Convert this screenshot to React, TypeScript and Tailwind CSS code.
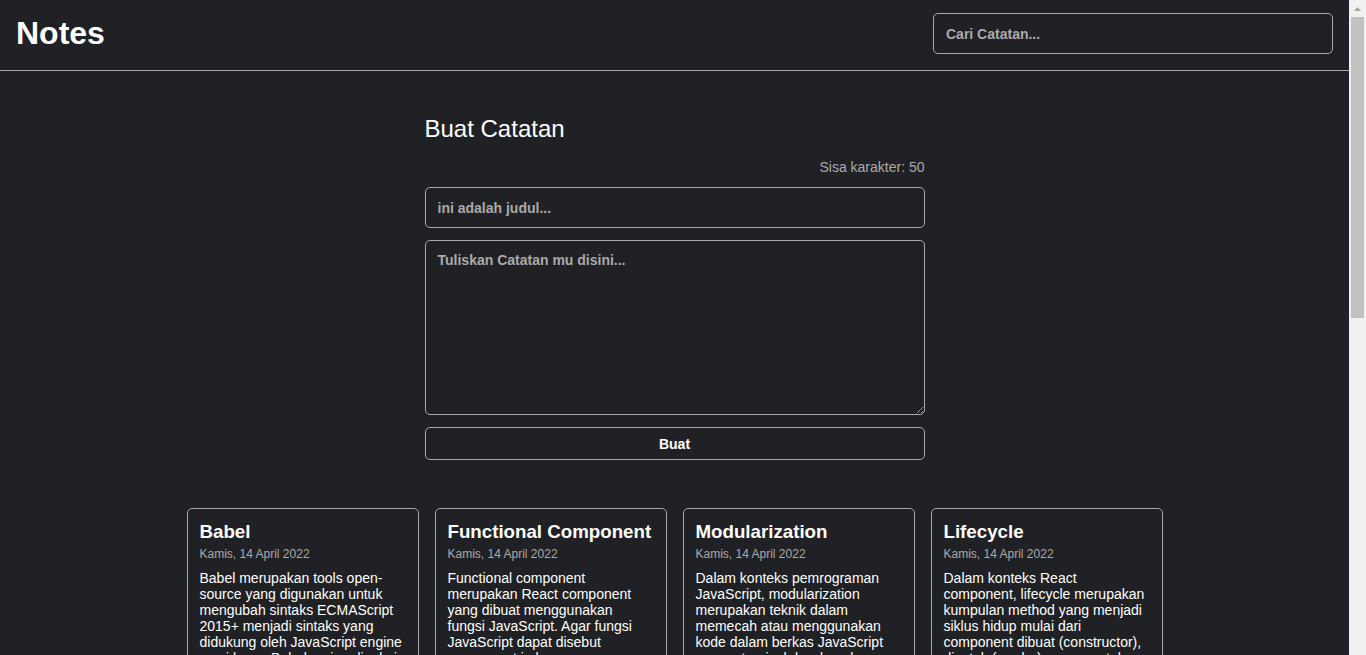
const notes = [
  {
    id: 1,
    title: "Babel",
    createdAt: "Kamis, 14 April 2022",
    body: "Babel merupakan tools open-source yang digunakan untuk mengubah sintaks ECMAScript 2015+ menjadi sintaks yang didukung oleh JavaScript engine versi lama. Babel sering dipakai ketika kita menggunakan sintaks terbaru termasuk sintaks JSX.",
  },
  {
    id: 2,
    title: "Functional Component",
    createdAt: "Kamis, 14 April 2022",
    body: "Functional component merupakan React component yang dibuat menggunakan fungsi JavaScript. Agar fungsi JavaScript dapat disebut component ia harus mengembalikan React element dan dipanggil layaknya React component.",
  },
  {
    id: 3,
    title: "Modularization",
    createdAt: "Kamis, 14 April 2022",
    body: "Dalam konteks pemrograman JavaScript, modularization merupakan teknik dalam memecah atau menggunakan kode dalam berkas JavaScript secara terpisah berdasarkan tanggung jawabnya masing-masing.",
  },
  {
    id: 4,
    title: "Lifecycle",
    createdAt: "Kamis, 14 April 2022",
    body: "Dalam konteks React component, lifecycle merupakan kumpulan method yang menjadi siklus hidup mulai dari component dibuat (constructor), dicetak (render), pasca-cetak (componentDidMount), dan sebagainya.",
  },
  {
    id: 5,
    title: "ESM",
    createdAt: "Kamis, 14 April 2022",
    body: "ESM (ECMAScript Module) merupakan format modularisasi standar JavaScript.",
  },
  {
    id: 6,
    title: "Module Bundler",
    createdAt: "Kamis, 14 April 2022",
    body: "Dalam konteks pemrograman JavaScript, module bundler merupakan tools yang digunakan untuk menggabungkan seluruh modul JavaScript yang digunakan oleh aplikasi menjadi satu berkas.",
  },
];

const NoteItem = ({ title, createdAt, body }: { title: string; createdAt: string; body: string }) => (
  <div className="border border-[#aaa] rounded-[5px] p-3">
    <h3 className="text-[18.72px] font-bold leading-[normal] text-white">{title}</h3>
    <p className="mt-1 text-[12px] leading-[normal] text-[#aaa]">{createdAt}</p>
    <p className="mt-[9px] text-[14px] leading-4 text-white">{body}</p>
  </div>
);

// browser scrollbar as it appears in the screenshot
const Scrollbar = () => (
  <div className="sticky top-0 w-[17px] h-screen shrink-0 bg-[#f1f1f1] flex flex-col items-center">
    <div className="h-[17px] w-full flex items-center justify-center">
      <svg width="7" height="4" viewBox="0 0 7 4">
        <path d="M0 4 L3.5 0 L7 4 Z" fill="#a3a3a3" />
      </svg>
    </div>
    <div className="w-[13px] h-[301px] bg-[#c1c1c1]" />
  </div>
);

export default function App() {
  return (
    <div className="flex bg-[#202124] leading-[normal] font-['Liberation_Sans',Arial,sans-serif]">
      <div className="flex-1 min-w-0 min-h-screen text-white">
        <header className="flex items-center justify-between px-4 pt-[13px] pb-[16px] border-b border-[#aaa]">
          <h1 className="text-[32px] font-bold leading-[normal]">Notes</h1>
          <input
            type="text"
            placeholder="Cari Catatan..."
            className="w-[400px] h-[41px] px-3 bg-transparent border border-[#aaa] rounded-[5px] text-[14px] font-bold text-white placeholder:text-[#aaa] outline-none"
          />
        </header>

        <main className="pb-10">
          <div className="w-[500px] mx-auto pt-[44px]">
            <h2 className="text-[24px] leading-[normal]">Buat Catatan</h2>
            <p className="mt-4 text-right text-[14px] leading-4 text-[#aaa]">Sisa karakter: 50</p>
            <form className="mt-3 flex flex-col gap-3">
              <input
                type="text"
                placeholder="ini adalah judul..."
                className="h-[41px] px-3 bg-transparent border border-[#aaa] rounded-[5px] text-[14px] font-bold text-white placeholder:text-[#aaa] outline-none"
              />
              <textarea
                placeholder="Tuliskan Catatan mu disini..."
                className="h-[175px] px-3 pt-[11px] pb-3 bg-transparent border border-[#aaa] rounded-[5px] text-[14px] leading-4 font-bold text-white placeholder:text-[#aaa] outline-none"
              />
              <button
                type="button"
                className="h-[33px] bg-transparent border border-[#aaa] rounded-[5px] text-[14px] font-bold text-white"
              >
                Buat
              </button>
            </form>
          </div>

          <div className="w-[976px] mx-auto mt-12 grid grid-cols-4 gap-4">
            {notes.map((note) => (
              <NoteItem key={note.id} title={note.title} createdAt={note.createdAt} body={note.body} />
            ))}
          </div>
        </main>
      </div>
      <Scrollbar />
    </div>
  );
}
